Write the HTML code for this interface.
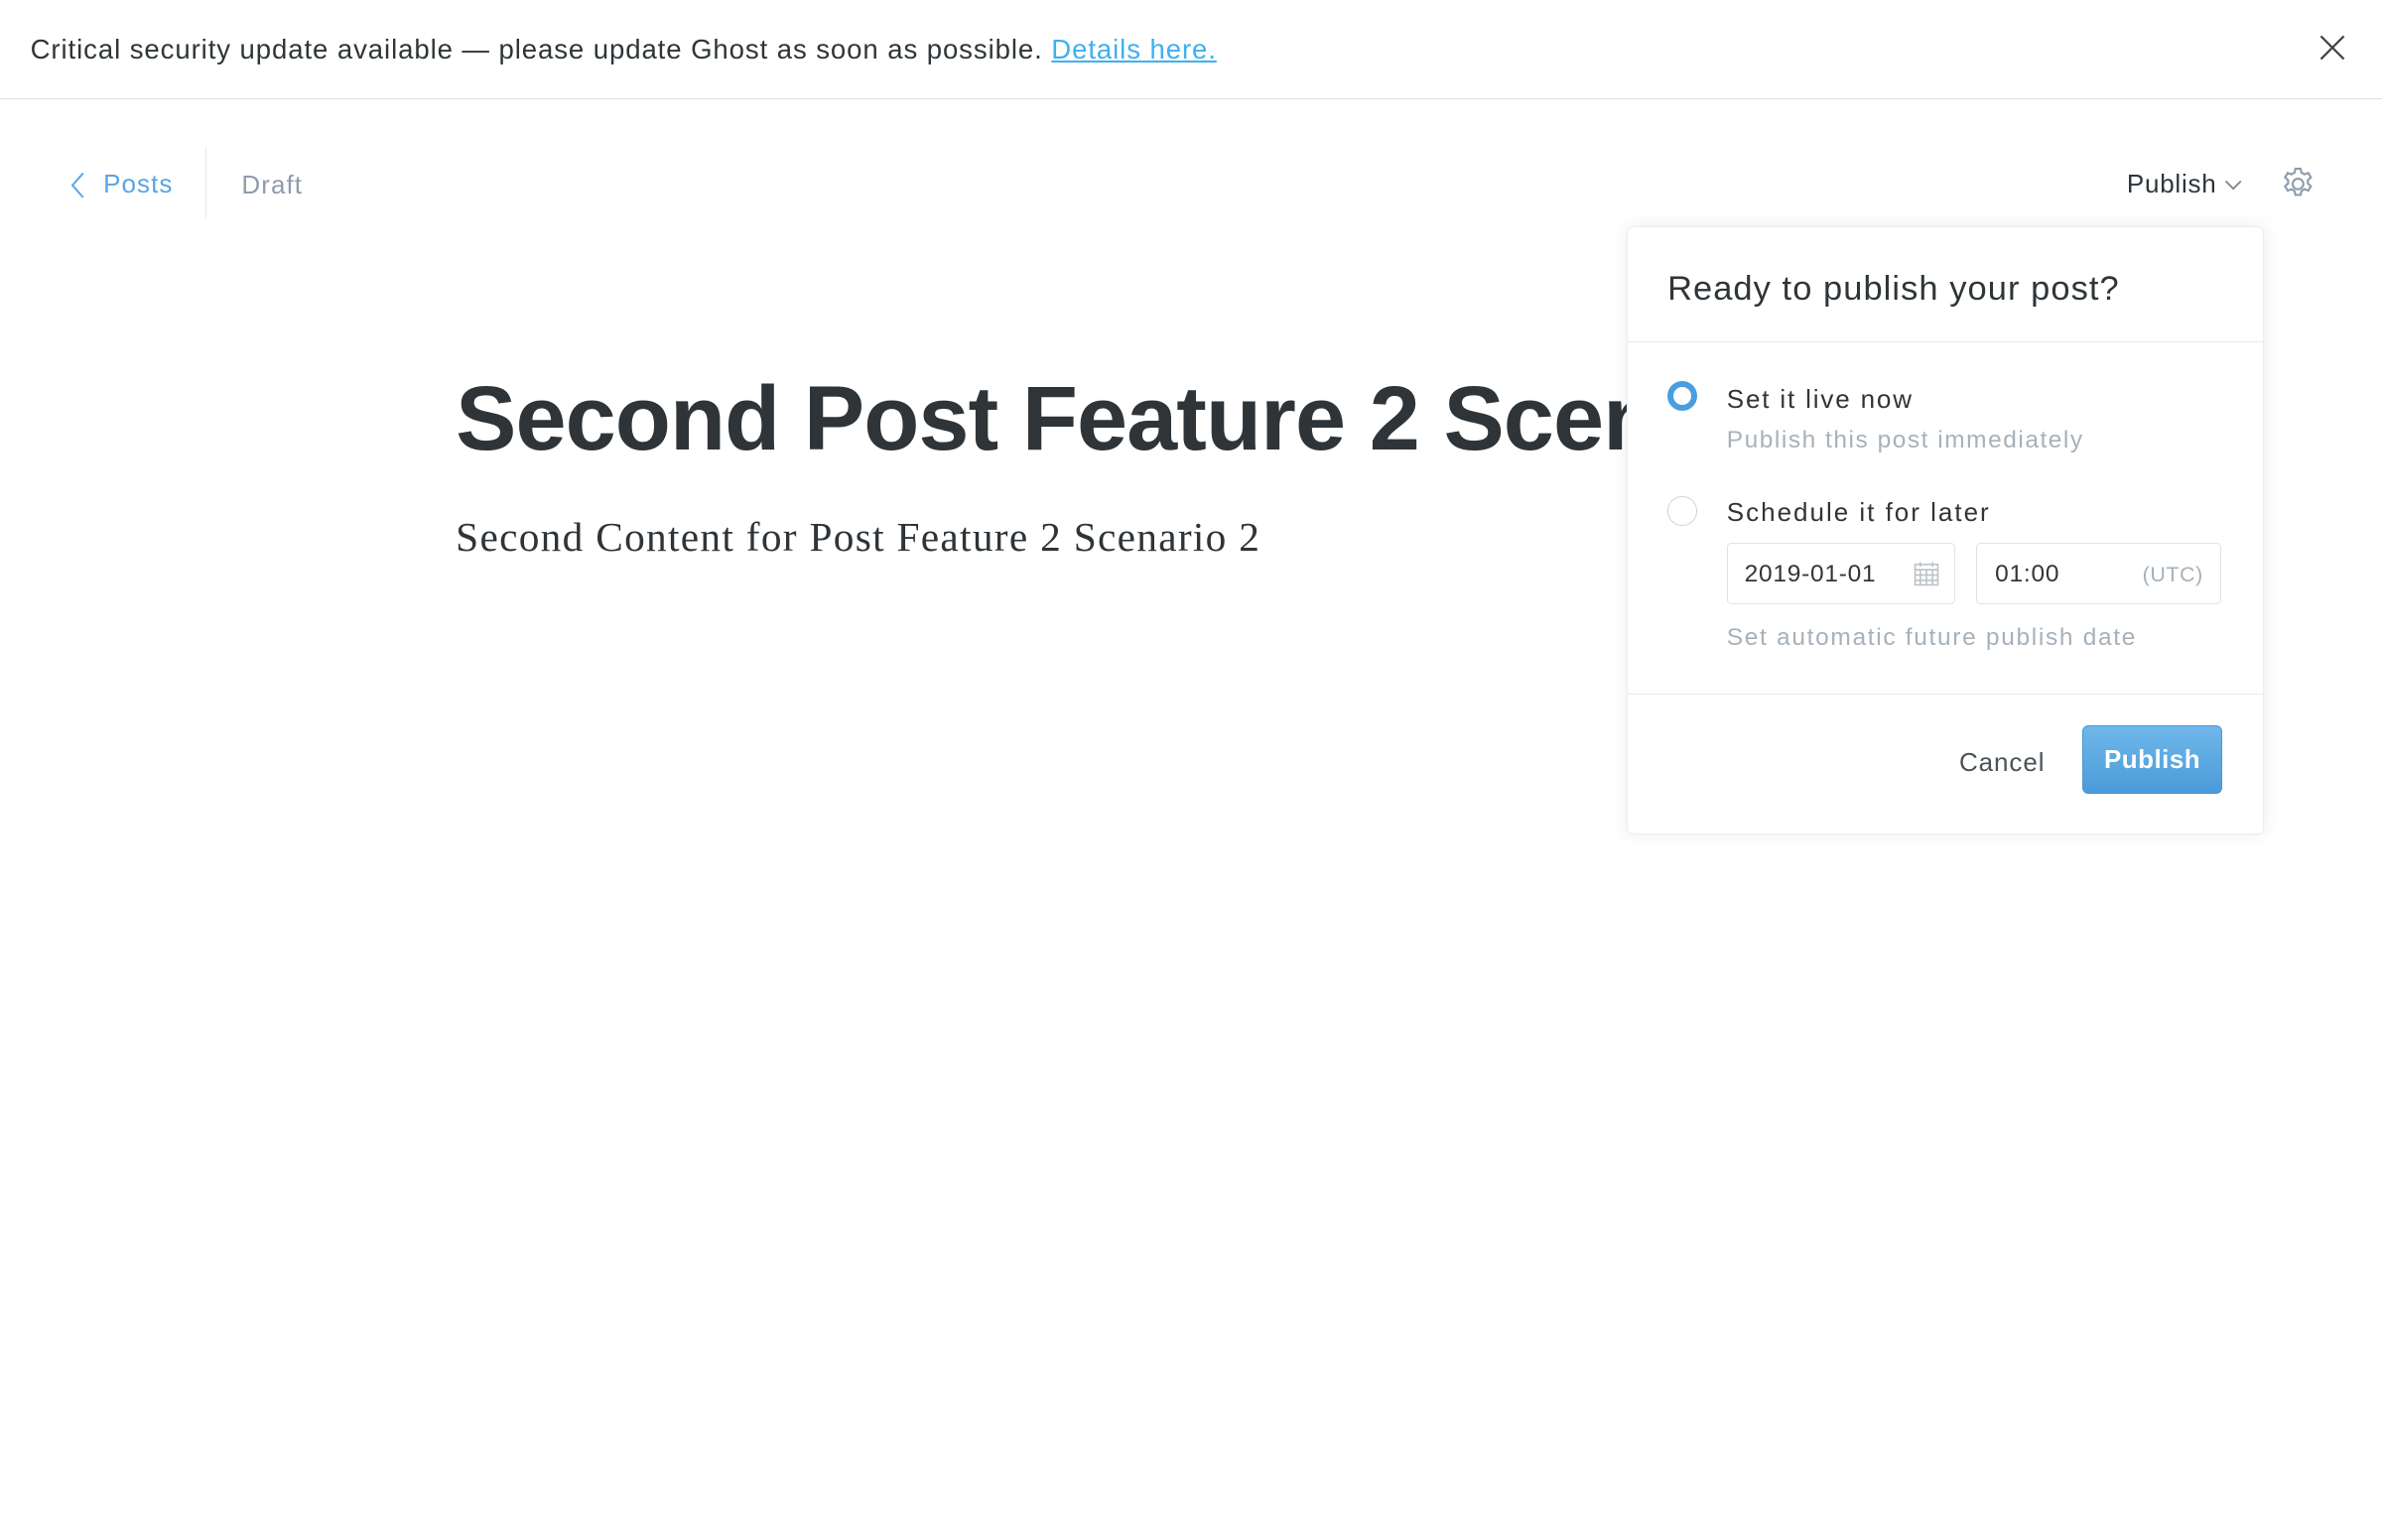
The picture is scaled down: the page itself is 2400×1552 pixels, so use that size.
<!DOCTYPE html>
<html><head><meta charset="utf-8"><style>
html,body{margin:0;padding:0;background:#fff;overflow:hidden;width:2400px;height:1552px}
#w{zoom:1.530612;width:1568px;height:1014px;position:relative;font-family:"Liberation Sans",sans-serif;color:#343f44}
.a{position:absolute;white-space:nowrap}
</style></head><body><div id="w">
<div class="a" style="left:0;top:0;width:1568px;height:65px;border-bottom:1px solid #dfdfdf"></div>
<div class="a" style="left:20px;top:22px;font-size:18px;letter-spacing:.6px;color:#2f3538">Critical security update available — please update Ghost as soon as possible. <span style="color:#3eb0ef;text-decoration:underline">Details here.</span></div>
<svg class="a" style="left:1527px;top:23px" width="17" height="17" viewBox="0 0 18 18"><path d="M1 1L17 17M17 1L1 17" stroke="#444" stroke-width="1.5"/></svg>

<svg class="a" style="left:46px;top:113px" width="12" height="18" viewBox="0 0 12 18"><path d="M9 1L2 9l7 8" fill="none" stroke="#5ba4e5" stroke-width="1.3"/></svg>
<div class="a" style="left:68px;top:111px;font-size:17px;letter-spacing:.7px;color:#5ba4e5">Posts</div>
<div class="a" style="left:135px;top:97px;width:1px;height:47px;background:#e6e9eb"></div>
<div class="a" style="left:159px;top:112px;font-size:17px;letter-spacing:.7px;color:#8e9cac">Draft</div>

<div class="a" style="left:1400px;top:111px;font-size:17px;letter-spacing:.5px;color:#2f3538">Publish</div>
<svg class="a" style="left:1464px;top:118px" width="12" height="8" viewBox="0 0 12 8"><path d="M1 1l5 5 5-5" fill="none" stroke="#7d878a" stroke-width="1.2"/></svg>
<svg class="a" style="left:1501px;top:109px" width="24" height="24" viewBox="0 0 24 24" fill="none" stroke="#8e9cac" stroke-width="1.4"><circle cx="12" cy="12" r="3.5"/><path d="M10.3 2h3.4l.6 2.6 2 1.1 2.5-.9 1.7 2.9-2 1.8v2.2l2 1.8-1.7 2.9-2.5-.9-2 1.1-.6 2.6h-3.4l-.6-2.6-2-1.1-2.5.9-1.7-2.9 2-1.8v-2.2l-2-1.8 1.7-2.9 2.5.9 2-1.1z"/></svg>

<div class="a" style="left:300px;top:242px;font-size:60px;font-weight:bold;color:#2e3438;letter-spacing:-0.6px">Second Post Feature 2 Scenario 2</div>
<div class="a" style="left:300px;top:338px;font-size:27px;letter-spacing:.85px;font-family:'Liberation Serif',serif;color:#2e3438">Second Content for Post Feature 2 Scenario 2</div>

<div class="a" style="left:1071px;top:149px;width:418px;height:399px;background:#fff;border:1px solid #e9eef1;border-radius:4px;box-shadow:0 0 12px rgba(0,0,0,.08)">
 <div class="a" style="left:26px;top:28px;font-size:22.5px;letter-spacing:.7px;color:#2f3538">Ready to publish your post?</div>
 <div class="a" style="left:0;top:75px;width:418px;height:1px;background:#e5eaee"></div>
 <div class="a" style="left:26px;top:101px;width:12px;height:12px;border:4px solid #4a9ee0;border-radius:50%;background:#fff"></div>
 <div class="a" style="left:65px;top:103px;font-size:17px;font-weight:500;color:#2f3538;letter-spacing:1.2px">Set it live now</div>
 <div class="a" style="left:65px;top:131px;font-size:16px;letter-spacing:1px;color:#a6b1ba">Publish this post immediately</div>
 <div class="a" style="left:26px;top:177px;width:18px;height:18px;border:1px solid #c8d6e0;border-radius:50%"></div>
 <div class="a" style="left:65px;top:178px;font-size:17px;font-weight:500;color:#2f3538;letter-spacing:1.3px">Schedule it for later</div>
 <div class="a" style="left:65px;top:208px;width:149px;height:39px;border:1px solid #dde3e8;border-radius:3px">
  <div class="a" style="left:11px;top:11px;font-size:16px;letter-spacing:.5px;color:#2f3538">2019-01-01</div>
  <svg class="a" style="left:122px;top:11px" width="17" height="17" viewBox="0 0 17 17" fill="none" stroke="#b6c1c8" stroke-width="1"><rect x="1" y="2.5" width="15" height="13.5"/><path d="M1 6h15M1 9.5h15M1 13h15M4.5 6v10M8.5 6v10M12.5 6v10M4.5 1v3M12.5 1v3"/></svg>
 </div>
 <div class="a" style="left:229px;top:208px;width:160px;height:39px;border:1px solid #dde3e8;border-radius:3px">
  <div class="a" style="left:12px;top:11px;font-size:16px;letter-spacing:.5px;color:#2f3538">01:00</div>
  <div class="a" style="left:109px;top:12px;font-size:14px;letter-spacing:.4px;color:#a6b1ba">(UTC)</div>
 </div>
 <div class="a" style="left:65px;top:261px;font-size:16px;letter-spacing:1.1px;color:#a6b1ba">Set automatic future publish date</div>
 <div class="a" style="left:0;top:307px;width:418px;height:1px;background:#e5eaee"></div>
 <div class="a" style="left:218px;top:342px;font-size:17px;letter-spacing:.6px;color:#4a5458">Cancel</div>
 <div class="a" style="left:299px;top:328px;width:91px;height:44px;border:1px solid #4a97d3;border-radius:4px;background:linear-gradient(#70b7ea,#4a9bd9);color:#fff;font-size:17px;font-weight:bold;letter-spacing:.3px;text-align:center;line-height:44px">Publish</div>
</div>
</div></body></html>
